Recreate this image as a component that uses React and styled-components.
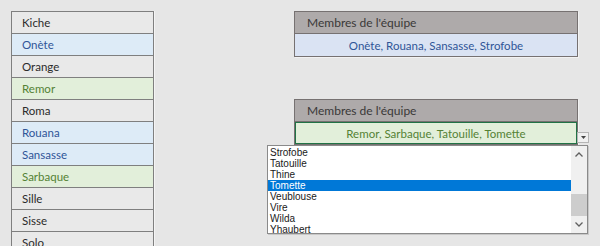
import React from 'react';
import styled, {createGlobalStyle, css} from 'styled-components';

const GlobalStyle = createGlobalStyle`
  html, body {
    margin: 0;
    padding: 0;
    background: #e6e6e6;
    overflow: hidden;
  }
  body {
    width: 600px;
    height: 246px;
    font-family: Lato, "Liberation Sans", sans-serif;
  }
`;

const palette = {
    blue: {bg: '#ddebf7', fg: '#2f5597'},
    green: {bg: '#e2efda', fg: '#548235'},
    plain: {bg: '#e9e9e9', fg: '#2b2b2b'}
};

const Page = styled.div`
  display: flex;
  align-items: flex-start;
  padding: 11px 0 0 11px;
  gap: 140px;
  height: 235px;
`;

const NameList = styled.div`
  width: 141px;
  border: 1px solid #7f7f7f;
  border-bottom: none;
  box-shadow: 1px 0 0 #f4f4f4;
`;

const NameRow = styled.div`
  height: 21px;
  line-height: 22px;
  padding-left: 10px;
  font-size: 11.5px;
  border-bottom: 1px solid #7f7f7f;
  background: ${p => palette[p.tone].bg};
  color: ${p => palette[p.tone].fg};
`;

const Summaries = styled.div`
  display: flex;
  flex-direction: column;
  gap: 42px;
`;

const Summary = styled.div`
  position: relative;
  width: 282px;
  border: 1px solid #767171;
  box-shadow: 1px 1px 0 #f2f2f2;
`;

const SummaryHead = styled.div`
  height: 21px;
  line-height: 22px;
  padding-left: 12px;
  font-size: 12px;
  color: #3a3838;
  background: #aeaaaa;
  border-bottom: 1px solid #767171;
`;

const SummaryCell = styled.div`
  height: 22px;
  line-height: 23px;
  text-align: center;
  font-size: 11.5px;
  background: ${p => p.tone === 'green' ? '#e2efda' : '#dae3f3'};
  color: ${p => palette[p.tone].fg};
  ${p => p.active && css`
    outline: 1px solid #217346;
    outline-offset: -1px;
  `};
`;

const ArrowBox = styled.div`
  position: absolute;
  right: -12px;
  top: 32px;
  width: 10px;
  height: 9px;
  background: #f0f0f0;
  border: 1px solid #b5b5b5;
  display: flex;
  align-items: center;
  justify-content: center;
`;

const Dropdown = styled.div`
  position: absolute;
  left: -28px;
  top: 45px;
  width: 319px;
  height: 87px;
  background: #fff;
  border: 1px solid #8a8a8a;
  box-shadow: 1px 1px 0 #c8c8c8;
  display: flex;
  z-index: 2;
`;

const Options = styled.div`
  flex: 1;
  padding-top: 1px;
  overflow: hidden;
`;

const Option = styled.div`
  height: 11px;
  line-height: 11px;
  padding-left: 2px;
  font-family: "Liberation Sans", sans-serif;
  font-size: 10px;
  color: ${p => p.selected ? '#fff' : '#1a1a1a'};
  background: ${p => p.selected ? '#0078d7' : 'transparent'};
`;

const Scrollbar = styled.div`
  width: 16px;
  background: #f0f0f0;
  display: flex;
  flex-direction: column;
`;

const ScrollArrow = styled.div`
  height: 17px;
  display: flex;
  align-items: center;
  justify-content: center;
`;

const Track = styled.div`
  flex: 1;
  display: flex;
  flex-direction: column;
  justify-content: flex-end;
`;

const Thumb = styled.div`
  height: 22px;
  background: #cdcdcd;
`;

const Chevron = ({up}) => (
    <svg width="8" height="5" viewBox="0 0 8 5">
        <path d={up ? 'M0.5 4.5 L4 1 L7.5 4.5' : 'M0.5 0.5 L4 4 L7.5 0.5'}
              fill="none" stroke="#606060" strokeWidth="1.3"/>
    </svg>
);

const names = [
    ['Kiche', 'plain'],
    ['Onète', 'blue'],
    ['Orange', 'plain'],
    ['Remor', 'green'],
    ['Roma', 'plain'],
    ['Rouana', 'blue'],
    ['Sansasse', 'blue'],
    ['Sarbaque', 'green'],
    ['Sille', 'plain'],
    ['Sisse', 'plain'],
    ['Solo', 'plain']
];

const choices = ['Strofobe', 'Tatouille', 'Thine', 'Tomette', 'Veublouse', 'Vire', 'Wilda', 'Yhaubert'];

export default function App() {
    return (
        <>
            <GlobalStyle/>
            <Page>
                <NameList>
                    {names.map(([name, tone]) => (
                        <NameRow key={name} tone={tone}>{name}</NameRow>
                    ))}
                </NameList>
                <Summaries>
                    <Summary>
                        <SummaryHead>Membres de l'équipe</SummaryHead>
                        <SummaryCell tone="blue">Onète, Rouana, Sansasse, Strofobe</SummaryCell>
                    </Summary>
                    <Summary>
                        <SummaryHead>Membres de l'équipe</SummaryHead>
                        <SummaryCell tone="green" active>Remor, Sarbaque, Tatouille, Tomette</SummaryCell>
                        <ArrowBox>
                            <svg width="5" height="3" viewBox="0 0 5 3">
                                <path d="M0 0 L5 0 L2.5 3 Z" fill="#444"/>
                            </svg>
                        </ArrowBox>
                        <Dropdown>
                            <Options>
                                {choices.map(c => (
                                    <Option key={c} selected={c === 'Tomette'}>{c}</Option>
                                ))}
                            </Options>
                            <Scrollbar>
                                <ScrollArrow><Chevron up/></ScrollArrow>
                                <Track><Thumb/></Track>
                                <ScrollArrow><Chevron/></ScrollArrow>
                            </Scrollbar>
                        </Dropdown>
                    </Summary>
                </Summaries>
            </Page>
        </>
    );
}
